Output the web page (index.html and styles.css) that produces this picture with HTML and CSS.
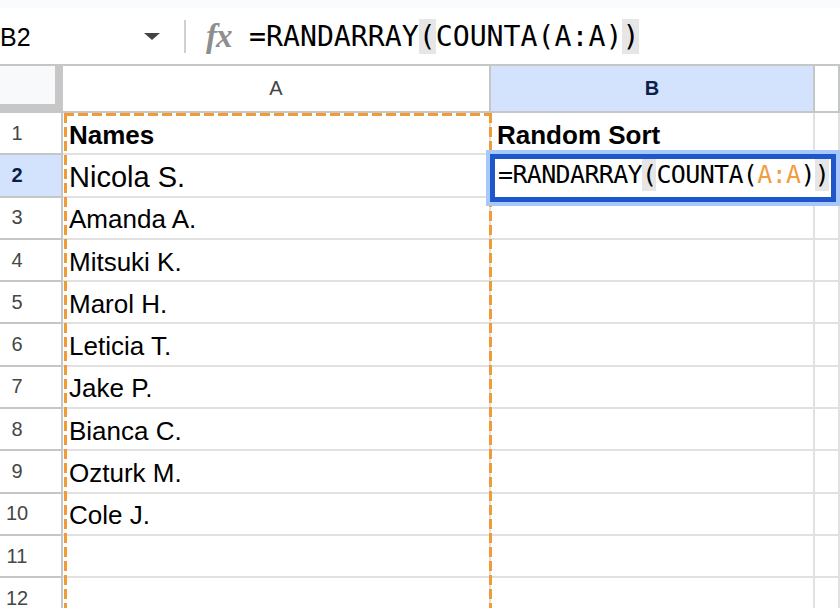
FILE: index.html
```html
<!DOCTYPE html>
<html lang="en">
<head>
  <meta charset="utf-8">
  <title>Random Sort</title>
  <link rel="stylesheet" href="styles.css">
</head>
<body>

  <div class="topstrip"></div>

  <div class="fbar">
    <div class="namebox"><span class="cellref">B2</span><span class="caret"></span></div>
    <div class="sep"></div>
    <div class="fx">fx</div>
    <div class="formula">=RANDARRAY<span class="par">(</span>COUNTA(A:A)<span class="par">)</span></div>
  </div>

  <div class="sheet">
    <div class="grid">
      <div class="corner"></div>
      <div class="colhead">A</div>
      <div class="colhead active">B</div>
      <div class="colhead"></div>

      <div class="rowhead">1</div><div class="cell bold">Names</div><div class="cell bold">Random Sort</div><div class="cell"></div>
      <div class="rowhead active">2</div><div class="cell big">Nicola S.</div><div class="cell"></div><div class="cell"></div>
      <div class="rowhead">3</div><div class="cell">Amanda A.</div><div class="cell"></div><div class="cell"></div>
      <div class="rowhead">4</div><div class="cell">Mitsuki K.</div><div class="cell"></div><div class="cell"></div>
      <div class="rowhead">5</div><div class="cell">Marol H.</div><div class="cell"></div><div class="cell"></div>
      <div class="rowhead">6</div><div class="cell">Leticia T.</div><div class="cell"></div><div class="cell"></div>
      <div class="rowhead">7</div><div class="cell">Jake P.</div><div class="cell"></div><div class="cell"></div>
      <div class="rowhead">8</div><div class="cell">Bianca C.</div><div class="cell"></div><div class="cell"></div>
      <div class="rowhead">9</div><div class="cell">Ozturk M.</div><div class="cell"></div><div class="cell"></div>
      <div class="rowhead">10</div><div class="cell">Cole J.</div><div class="cell"></div><div class="cell"></div>
      <div class="rowhead">11</div><div class="cell"></div><div class="cell"></div><div class="cell"></div>
      <div class="rowhead">12</div><div class="cell"></div><div class="cell"></div><div class="cell"></div>
    </div>

    <!-- copy marquee round column A -->
    <div class="marquee"></div>

    <!-- in-cell editor on B2 -->
    <div class="editor">=RANDARRAY<span class="par">(</span>COUNTA(<span class="range">A:A</span>)<span class="par">)</span></div>
  </div>

</body>
</html>
```

FILE: styles.css
```css
html, body {
  margin: 0;
  padding: 0;
  background: #fff;
}
body {
  width: 840px;
  height: 608px;
  overflow: hidden;
  font-family: "Liberation Sans", Arial, sans-serif;
  color: #000;
}

.topstrip { height: 8px; background: #f9fbfd; }

/* formula bar */
.fbar {
  height: 56px;
  display: flex;
  align-items: center;
  background: #fff;
}
.namebox {
  width: 184px;
  display: flex;
  align-items: center;
}
.cellref { font-size: 25px; padding-top: 2px; }
.caret {
  margin-left: auto;
  margin-right: 24px;
  width: 0; height: 0;
  border-left: 8px solid transparent;
  border-right: 8px solid transparent;
  border-top: 7px solid #444;
}
.sep { width: 2px; height: 33px; background: #d0d0d0; }
.fx {
  width: 43px;
  padding-left: 20px;
  font: italic bold 33px "Liberation Serif", "Times New Roman", serif;
  color: #8e8e8e;
  letter-spacing: -1px;
}
.formula {
  font-family: "DejaVu Sans Mono", monospace;
  font-size: 28.2px;
  line-height: 35px;
  white-space: nowrap;
}
.par { display: inline-block; background: #e6e6e6; }

/* grid */
.sheet {
  position: relative;
  height: 542px;
  overflow: hidden;
  border-top: 2px solid #c4c7c5;
}
.grid {
  display: grid;
  grid-template-columns: 63px 428px 324px 25px;
  grid-template-rows: 47px repeat(12, 42.3px);
}
.grid > div {
  box-sizing: border-box;
  border-right: 2px solid #e1e1e1;
  border-bottom: 2px solid #e1e1e1;
  display: flex;
  align-items: center;
  white-space: nowrap;
  overflow: hidden;
}
.grid > .corner {
  background: #f8f9fa;
  border-right: 8px solid #c7c7c7;
  border-bottom: 9px solid #c7c7c7;
}
.grid > .colhead {
  justify-content: center;
  font-size: 20px;
  color: #444;
  border-color: #c4c7c5;
}
.grid > .rowhead {
  padding-right: 27px;
  justify-content: center;
  font-size: 20px;
  color: #444746;
  border-color: #c4c7c5;
}
.grid > .active {
  background: #d3e3fd;
  color: #0b1f48;
  font-weight: bold;
}
.cell {
  padding: 4px 0 0 6px;
  font-size: 26px;
}
.cell.bold { font-weight: bold; }
.cell.big { font-size: 29px; padding-top: 5px; }

.marquee {
  position: absolute;
  left: 64px;
  top: 47px;
  width: 428px;
  height: 495px;
  background:
    repeating-linear-gradient(to right, #f09b38 0 10px, transparent 10px 14px) left top / 100% 3px no-repeat,
    repeating-linear-gradient(to bottom, #f09b38 0 10px, transparent 10px 14px) left top / 3px 100% no-repeat,
    repeating-linear-gradient(to bottom, #f09b38 0 10px, transparent 10px 14px) right top / 3px 100% no-repeat;
}

.editor {
  position: absolute;
  left: 486px;
  top: 84px;
  width: 354px;
  height: 56px;
  box-sizing: border-box;
  border: 4px solid #a8c7fa;
  box-shadow: inset 0 0 0 5px #1f56c9;
  background: #fff;
  padding: 5px 0 0 8px;
  font-family: "DejaVu Sans Mono", monospace;
  font-size: 25px;
  letter-spacing: -0.65px;
  line-height: 32px;
  white-space: nowrap;
}
.editor .range { color: #f29d3f; }
```
